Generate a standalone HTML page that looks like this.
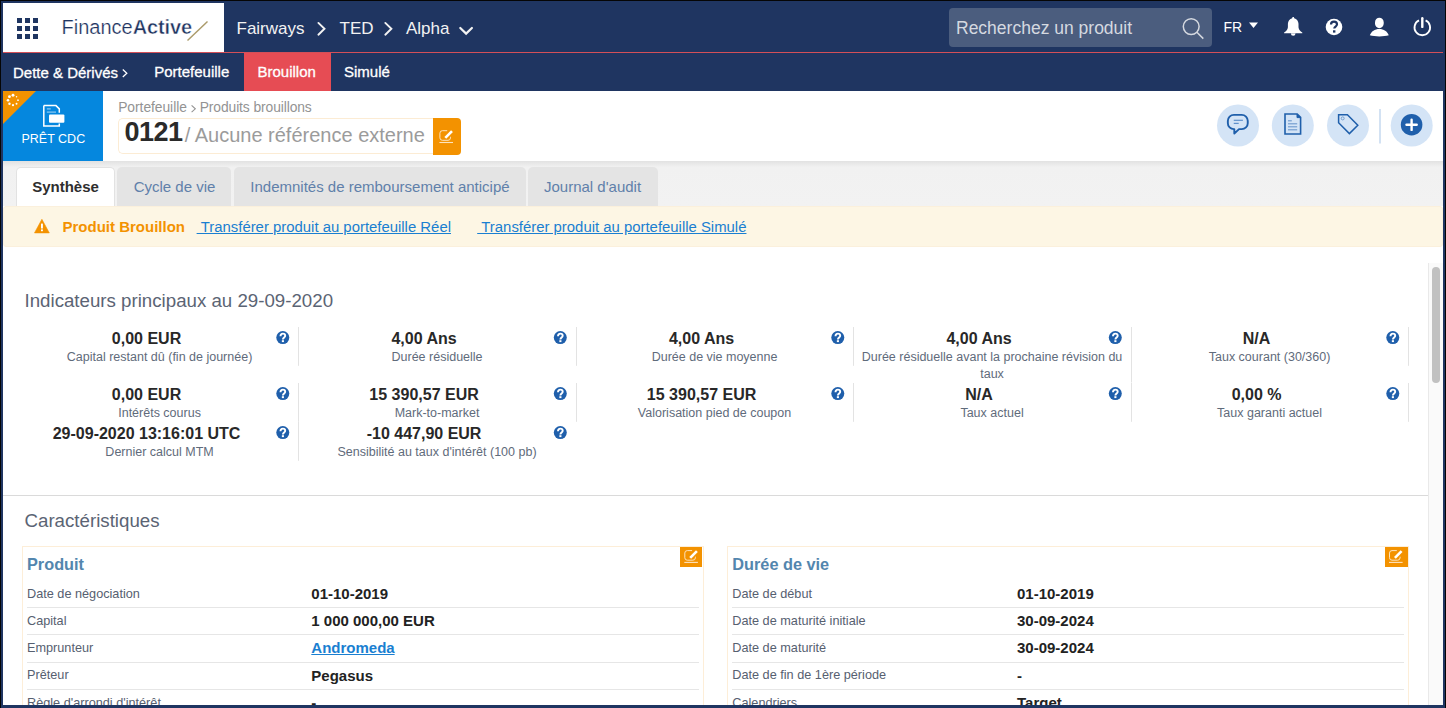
<!DOCTYPE html>
<html><head><meta charset="utf-8"><title>Finance Active</title>
<style>
html,body{margin:0;padding:0;width:1446px;height:708px;overflow:hidden;background:#1f3561}
body{position:relative;font-family:"Liberation Sans",sans-serif}
.t{position:absolute;white-space:nowrap}
.b{position:absolute}
svg.b{overflow:visible}
u{text-decoration:underline}
</style></head><body>
<div class="b" style="left:0px;top:0px;width:1446px;height:708px;background:#1f3561"></div>
<div class="b" style="left:0px;top:0px;width:1446px;height:1px;background:#050505"></div>
<div class="b" style="left:0px;top:0px;width:1px;height:708px;background:#050505"></div>
<div class="b" style="left:1445px;top:0px;width:1px;height:708px;background:#050505"></div>
<div class="b" style="left:3px;top:3px;width:1440px;height:702px;background:#fff"></div>
<div class="b" style="left:3px;top:3px;width:1440px;height:49px;background:#1f3561"></div>
<div class="b" style="left:3px;top:3px;width:221px;height:49px;background:#fff"></div>
<div class="b" style="left:3px;top:52px;width:1440px;height:1px;background:#d44f58"></div>
<div class="b" style="left:17px;top:18px;width:5px;height:5px;background:#1f3561"></div>
<div class="b" style="left:17px;top:26px;width:5px;height:5px;background:#1f3561"></div>
<div class="b" style="left:17px;top:34px;width:5px;height:5px;background:#1f3561"></div>
<div class="b" style="left:25px;top:18px;width:5px;height:5px;background:#1f3561"></div>
<div class="b" style="left:25px;top:26px;width:5px;height:5px;background:#1f3561"></div>
<div class="b" style="left:25px;top:34px;width:5px;height:5px;background:#1f3561"></div>
<div class="b" style="left:33px;top:18px;width:5px;height:5px;background:#1f3561"></div>
<div class="b" style="left:33px;top:26px;width:5px;height:5px;background:#1f3561"></div>
<div class="b" style="left:33px;top:34px;width:5px;height:5px;background:#1f3561"></div>
<div class="t" style="left:61.5px;top:17.27px;font-size:20px;line-height:20px;color:#1f3561"><span style="-webkit-text-stroke:0.22px #fff">Finance</span><b style="font-weight:700;-webkit-text-stroke:0.45px #fff;letter-spacing:-0.1px">Active</b></div>
<svg class="b" style="left:0;top:0" width="1446" height="708"><line x1="187.5" y1="40.5" x2="207.5" y2="21.5" stroke="#ab9b6b" stroke-width="1.5"/></svg>
<div class="t " style="left:236.50px;top:19.91px;font-size:17px;line-height:17px;font-weight:400;color:#f2f2f2;">Fairways</div>
<div class="t " style="left:339.50px;top:19.91px;font-size:17px;line-height:17px;font-weight:400;color:#f2f2f2;">TED</div>
<div class="t " style="left:406.00px;top:19.91px;font-size:17px;line-height:17px;font-weight:400;color:#f2f2f2;">Alpha</div>
<svg class="b" style="left:0;top:0" width="1446" height="708" fill="none" stroke="#f2f2f2" stroke-width="1.9" stroke-linecap="round"><polyline points="318.4,22.9 324.5,28.8 318.4,34.7"/><polyline points="385.3,22.9 391.4,28.8 385.3,34.7"/><polyline points="460.3,28 466.1,33.6 471.9,28" stroke-width="2.2"/></svg>
<div class="b" style="left:949px;top:8px;width:263px;height:39px;background:#4b5d7e;border-radius:4px"></div>
<div class="t " style="left:956.00px;top:19.59px;font-size:17.5px;line-height:17.5px;font-weight:400;color:#d5d9e0;">Recherchez un produit</div>
<svg class="b" style="left:0;top:0" width="1446" height="708" fill="none" stroke="#d5d9e0" stroke-width="1.5"><circle cx="1191.2" cy="26.6" r="7.9"/><line x1="1196.9" y1="32.3" x2="1203.3" y2="38.6"/></svg>
<div class="t " style="left:1223.50px;top:20.45px;font-size:14px;line-height:14px;font-weight:400;color:#fff;">FR</div>
<svg class="b" style="left:0;top:0" width="1446" height="708"><polygon points="1249,22.5 1258,22.5 1253.5,28" fill="#fff"/><path d="M1293.2,17 c0.6,0 1,0.5 1,1.2 c2.6,0.6 4.2,2.8 4.3,5.6 v3.5 c0.3,2.5 1.6,4 3.8,5.1 v0.8 h-18.2 v-0.8 c2.2,-1.1 3.5,-2.6 3.8,-5.1 v-3.5 c0.1,-2.8 1.7,-5 4.3,-5.6 c0,-0.7 0.4,-1.2 1,-1.2z M1290.9,33.4 a2.3,2.3 0 0 0 4.6,0z" fill="#fff"/><circle cx="1334" cy="27" r="8.3" fill="#fff"/><path d="M1331,24.6 c0,-1.9 1.3,-3 3,-3 c1.8,0 3,1.1 3,2.7 c0,2.2 -2.7,2.3 -2.7,4.2" fill="none" stroke="#1f3561" stroke-width="2.2"/><rect x="1333" y="30.3" width="2.4" height="2.3" fill="#1f3561"/><rect x="1375" y="17.7" width="8.7" height="10.5" rx="4.35" ry="4.6" fill="#fff"/><path d="M1369.8,35.3 c1.5,-3.9 5,-6.3 9.5,-6.3 s8,2.4 9.5,6.3 c-2.5,0.8 -6,1.1 -9.5,1.1 s-7,-0.3 -9.5,-1.1z" fill="#fff"/><path d="M1419,20.4 A7.8,7.8 0 1 0 1425.6,20.4" fill="none" stroke="#fff" stroke-width="1.8"/><line x1="1422.3" y1="18.2" x2="1422.3" y2="26.9" stroke="#fff" stroke-width="2.4" stroke-linecap="round"/></svg>
<div class="b" style="left:3px;top:53px;width:1440px;height:38px;background:#1f3561"></div>
<div class="t " style="left:13.00px;top:65.00px;font-size:15px;line-height:15px;font-weight:400;color:#fff;-webkit-text-stroke:0.3px #fff">Dette &amp; Dérivés</div>
<svg class="b" style="left:0;top:0" width="1446" height="708"><polyline points="122.8,69.5 126.8,73.3 122.8,77" fill="none" stroke="#fff" stroke-width="1.3"/></svg>
<div class="t " style="left:154.20px;top:64.10px;font-size:15px;line-height:15px;font-weight:400;color:#fff;-webkit-text-stroke:0.3px #fff">Portefeuille</div>
<div class="b" style="left:244px;top:53px;width:87px;height:38px;background:#e64c54"></div>
<div class="t " style="left:257.50px;top:64.10px;font-size:15px;line-height:15px;font-weight:400;color:#fff;-webkit-text-stroke:0.3px #fff">Brouillon</div>
<div class="t " style="left:344.00px;top:64.10px;font-size:15px;line-height:15px;font-weight:400;color:#fff;-webkit-text-stroke:0.3px #fff">Simulé</div>
<div class="b" style="left:3px;top:91px;width:100px;height:70px;background:#0587de"></div>
<svg class="b" style="left:0;top:0" width="1446" height="708"><polygon points="3,91 36,91 3,124" fill="#f39200"/>
<circle cx="13.00" cy="95.20" r="1.45" fill="#fff"/>
<circle cx="16.54" cy="96.66" r="0.75" fill="#fff"/>
<circle cx="18.00" cy="100.20" r="0.85" fill="#fff"/>
<circle cx="16.54" cy="103.74" r="0.95" fill="#fff"/>
<circle cx="13.00" cy="105.20" r="1.1" fill="#fff"/>
<circle cx="9.46" cy="103.74" r="1.2" fill="#fff"/>
<circle cx="8.00" cy="100.20" r="1.3" fill="#fff"/>
<circle cx="9.46" cy="96.66" r="1.4" fill="#fff"/>
<path d="M43.8,105.6 h12.2 l3.3,3.3 v3.8 M59.3,123.5 v2.4 h-15.5 v-20.3" fill="none" stroke="#fff" stroke-width="1.5"/><rect x="49" y="114.4" width="15.4" height="8.3" rx="1" fill="#fff"/><rect x="46.8" y="108.3" width="3.9" height="1.2" fill="#8fcaf2"/><rect x="46.8" y="111.5" width="9.2" height="1.2" fill="#8fcaf2"/></svg>
<div class="t " style="left:21.50px;top:132.72px;font-size:12.5px;line-height:12.5px;font-weight:400;color:#fff;">PRÊT CDC</div>
<div class="t " style="left:118.20px;top:101.18px;font-size:13.85px;line-height:13.85px;font-weight:400;color:#939393;letter-spacing:-0.05px">Portefeuille</div>
<div class="t " style="left:199.70px;top:101.18px;font-size:13.85px;line-height:13.85px;font-weight:400;color:#939393;letter-spacing:-0.1px">Produits brouillons</div>
<svg class="b" style="left:0;top:0" width="1446" height="708"><polyline points="191.6,105.4 195.3,108.8 191.6,112.1" fill="none" stroke="#939393" stroke-width="1.1"/></svg>
<div class="b" style="left:118px;top:118px;width:316px;height:36px;border:1px solid #fcecd4;border-right:none;border-radius:5px 0 0 5px;box-sizing:border-box"></div>
<div class="t " style="left:124.50px;top:118.64px;font-size:27px;line-height:27px;font-weight:700;color:#2a2a2a;letter-spacing:-0.55px">0121</div>
<div class="t " style="left:184.70px;top:124.67px;font-size:20px;line-height:20px;font-weight:400;color:#9b9b9b;">/ Aucune référence externe</div>
<div class="b" style="left:433px;top:118px;width:27.5px;height:37px;background:#f39200;border-radius:0 4px 4px 0"></div>
<svg class="b" style="left:0;top:0" width="1446" height="708"><g transform="translate(439.4,130.2) scale(1)" fill="none"><path d="M7.8,0.5 H3 A2.5,2.5 0 0 0 0.5,3 V7.6 A2.5,2.5 0 0 0 3,10.1 H8.6 A2.5,2.5 0 0 0 11.1,7.6 V6.6" stroke-width="1" stroke="#fde3bd"/><line x1="5.9" y1="7.7" x2="12.6" y2="1.0" stroke-width="2.6" stroke="#fff"/><line x1="0" y1="12.3" x2="13.6" y2="12.3" stroke-width="1.1" stroke="#fde3bd"/></g></svg>
<svg class="b" style="left:0;top:0" width="1446" height="708">
<circle cx="1238" cy="125.5" r="21" fill="#d4e4f6"/>
<circle cx="1292.8" cy="125.5" r="21" fill="#d4e4f6"/>
<circle cx="1348" cy="125.5" r="21" fill="#d4e4f6"/>
<circle cx="1411.7" cy="125.5" r="21" fill="#d4e4f6"/>
<rect x="1379" y="109" width="2" height="34.5" fill="#d3e2f3"/>
<path d="M1234.3,129.15 V133.6 L1239,129.15 H1241.75 A6,6 0 0 0 1247.75,123.15 V120.85 A6,6 0 0 0 1241.75,114.85 H1233.85 A6,6 0 0 0 1227.85,120.85 V123.15 A6,6 0 0 0 1233.85,129.15 Z" fill="none" stroke="#1f5fab" stroke-width="1.9" stroke-linejoin="round"/><line x1="1233.75" y1="120.3" x2="1242.9" y2="120.3" stroke="#5f90cb" stroke-width="1.2"/><line x1="1233.75" y1="123.4" x2="1238.7" y2="123.4" stroke="#5f90cb" stroke-width="1.2"/>
<path d="M1285,114 h12.2 l3.4,3.4 v16.6 h-15.6z" fill="none" stroke="#1f5fab" stroke-width="1.6"/><path d="M1297,114 v3.6 h3.6" fill="#1f5fab" stroke="#1f5fab" stroke-width="1"/><g stroke="#6c98cd" stroke-width="1.1"><line x1="1288" y1="120.8" x2="1291.8" y2="120.8"/><line x1="1288" y1="123.8" x2="1297.2" y2="123.8"/><line x1="1288" y1="126.8" x2="1297.2" y2="126.8"/><line x1="1288" y1="129.8" x2="1297.2" y2="129.8"/></g>
<path d="M1338.6,114.7 h8.8 l10.4,10.6 l-8.4,8.3 l-10.8,-10.8z" fill="none" stroke="#1f5fab" stroke-width="1.5" stroke-linejoin="miter"/><circle cx="1342.7" cy="118.4" r="1.5" fill="none" stroke="#6c98cd" stroke-width="0.9"/>
<circle cx="1411.6" cy="124.7" r="10.8" fill="#1f5fab"/><line x1="1406.5" y1="124.7" x2="1416.7" y2="124.7" stroke="#fff" stroke-width="2.4" stroke-linecap="round"/><line x1="1411.6" y1="119.7" x2="1411.6" y2="129.9" stroke="#fff" stroke-width="2.4" stroke-linecap="round"/>
</svg>
<div class="b" style="left:3px;top:161px;width:1440px;height:45px;background:linear-gradient(#e2e2e2, #f1f1f1 6px, #f2f2f2)"></div>
<div class="b" style="left:16px;top:167px;width:99px;height:40px;background:#fff;border:1px solid #e2e2e2;border-bottom:none;border-radius:5px 5px 0 0;box-sizing:border-box"></div>
<div class="t " style="left:32.20px;top:179.30px;font-size:15px;line-height:15px;font-weight:700;color:#2e2e2e;">Synthèse</div>
<div class="b" style="left:117px;top:167px;width:114px;height:39px;background:#e4e4e4;border-radius:5px 5px 0 0"></div>
<div class="t " style="left:133.70px;top:179.30px;font-size:15px;line-height:15px;font-weight:400;color:#6080aa;">Cycle de vie</div>
<div class="b" style="left:234px;top:167px;width:292px;height:39px;background:#e4e4e4;border-radius:5px 5px 0 0"></div>
<div class="t " style="left:250.30px;top:179.30px;font-size:15px;line-height:15px;font-weight:400;color:#6080aa;">Indemnités de remboursement anticipé</div>
<div class="b" style="left:528px;top:167px;width:130px;height:39px;background:#e4e4e4;border-radius:5px 5px 0 0"></div>
<div class="t " style="left:544.00px;top:179.30px;font-size:15px;line-height:15px;font-weight:400;color:#6080aa;">Journal d'audit</div>
<div class="b" style="left:3px;top:206px;width:1440px;height:41px;background:#fdf6e4;border:1px solid #fbf0dc;border-radius:3px;box-sizing:border-box"></div>
<svg class="b" style="left:0;top:0" width="1446" height="708"><path d="M41.9,219.3 l7.4,13.6 h-14.8z" fill="#f39200" stroke="#f39200" stroke-width="0.6" stroke-linejoin="round"/><rect x="41" y="223.6" width="1.9" height="4.9" fill="#fff"/><rect x="41" y="229.4" width="1.9" height="1.8" fill="#fff"/></svg>
<div class="t " style="left:62.50px;top:219.30px;font-size:15px;line-height:15px;font-weight:700;color:#f39200;">Produit Brouillon</div>
<div class="t " style="left:196.60px;top:220.19px;font-size:14.9px;line-height:14.9px;font-weight:400;color:#1a7fd1;text-decoration:underline">&nbsp;Transférer produit au portefeuille Réel</div>
<div class="t " style="left:477.20px;top:220.19px;font-size:14.9px;line-height:14.9px;font-weight:400;color:#1a7fd1;text-decoration:underline">&nbsp;Transférer produit au portefeuille Simulé</div>
<div class="b" style="left:1428px;top:263px;width:15px;height:442px;background:#fafafa;border-left:1px solid #e9e9e9;box-sizing:border-box"></div>
<div class="b" style="left:1432px;top:267px;width:8px;height:116px;background:#c1c1c1;border-radius:4px"></div>
<div class="t " style="left:24.50px;top:292.47px;font-size:18.7px;line-height:18.7px;font-weight:400;color:#5b6474;">Indicateurs principaux au 29-09-2020</div>
<svg class="b" style="left:0;top:0" width="1446" height="708">
<rect x="298" y="327" width="1" height="38.8" fill="#e3e3e3"/><circle cx="282.80" cy="337.60" r="6.5" fill="#1f5fab"/><path d="M280.50,336.20 C280.50,334.40 281.60,333.60 282.90,333.60 C284.30,333.60 285.20,334.50 285.20,335.70 C285.20,337.40 282.90,337.60 282.90,339.50" fill="none" stroke="#fff" stroke-width="1.9"/><rect x="281.85" y="340.20" width="2.1" height="1.9" fill="#fff"/><rect x="576" y="327" width="1" height="38.8" fill="#e3e3e3"/><circle cx="560.30" cy="337.60" r="6.5" fill="#1f5fab"/><path d="M558.00,336.20 C558.00,334.40 559.10,333.60 560.40,333.60 C561.80,333.60 562.70,334.50 562.70,335.70 C562.70,337.40 560.40,337.60 560.40,339.50" fill="none" stroke="#fff" stroke-width="1.9"/><rect x="559.35" y="340.20" width="2.1" height="1.9" fill="#fff"/><rect x="853" y="327" width="1" height="38.8" fill="#e3e3e3"/><circle cx="837.80" cy="337.60" r="6.5" fill="#1f5fab"/><path d="M835.50,336.20 C835.50,334.40 836.60,333.60 837.90,333.60 C839.30,333.60 840.20,334.50 840.20,335.70 C840.20,337.40 837.90,337.60 837.90,339.50" fill="none" stroke="#fff" stroke-width="1.9"/><rect x="836.85" y="340.20" width="2.1" height="1.9" fill="#fff"/><rect x="1131" y="327" width="1" height="55.5" fill="#e3e3e3"/><circle cx="1115.30" cy="337.60" r="6.5" fill="#1f5fab"/><path d="M1113.00,336.20 C1113.00,334.40 1114.10,333.60 1115.40,333.60 C1116.80,333.60 1117.70,334.50 1117.70,335.70 C1117.70,337.40 1115.40,337.60 1115.40,339.50" fill="none" stroke="#fff" stroke-width="1.9"/><rect x="1114.35" y="340.20" width="2.1" height="1.9" fill="#fff"/><rect x="1408" y="327" width="1" height="38.8" fill="#e3e3e3"/><circle cx="1392.80" cy="337.60" r="6.5" fill="#1f5fab"/><path d="M1390.50,336.20 C1390.50,334.40 1391.60,333.60 1392.90,333.60 C1394.30,333.60 1395.20,334.50 1395.20,335.70 C1395.20,337.40 1392.90,337.60 1392.90,339.50" fill="none" stroke="#fff" stroke-width="1.9"/><rect x="1391.85" y="340.20" width="2.1" height="1.9" fill="#fff"/><rect x="298" y="383" width="1" height="38.8" fill="#e3e3e3"/><circle cx="282.80" cy="393.60" r="6.5" fill="#1f5fab"/><path d="M280.50,392.20 C280.50,390.40 281.60,389.60 282.90,389.60 C284.30,389.60 285.20,390.50 285.20,391.70 C285.20,393.40 282.90,393.60 282.90,395.50" fill="none" stroke="#fff" stroke-width="1.9"/><rect x="281.85" y="396.20" width="2.1" height="1.9" fill="#fff"/><rect x="576" y="383" width="1" height="38.8" fill="#e3e3e3"/><circle cx="560.30" cy="393.60" r="6.5" fill="#1f5fab"/><path d="M558.00,392.20 C558.00,390.40 559.10,389.60 560.40,389.60 C561.80,389.60 562.70,390.50 562.70,391.70 C562.70,393.40 560.40,393.60 560.40,395.50" fill="none" stroke="#fff" stroke-width="1.9"/><rect x="559.35" y="396.20" width="2.1" height="1.9" fill="#fff"/><rect x="853" y="383" width="1" height="38.8" fill="#e3e3e3"/><circle cx="837.80" cy="393.60" r="6.5" fill="#1f5fab"/><path d="M835.50,392.20 C835.50,390.40 836.60,389.60 837.90,389.60 C839.30,389.60 840.20,390.50 840.20,391.70 C840.20,393.40 837.90,393.60 837.90,395.50" fill="none" stroke="#fff" stroke-width="1.9"/><rect x="836.85" y="396.20" width="2.1" height="1.9" fill="#fff"/><rect x="1131" y="383" width="1" height="38.8" fill="#e3e3e3"/><circle cx="1115.30" cy="393.60" r="6.5" fill="#1f5fab"/><path d="M1113.00,392.20 C1113.00,390.40 1114.10,389.60 1115.40,389.60 C1116.80,389.60 1117.70,390.50 1117.70,391.70 C1117.70,393.40 1115.40,393.60 1115.40,395.50" fill="none" stroke="#fff" stroke-width="1.9"/><rect x="1114.35" y="396.20" width="2.1" height="1.9" fill="#fff"/><rect x="1408" y="383" width="1" height="38.8" fill="#e3e3e3"/><circle cx="1392.80" cy="393.60" r="6.5" fill="#1f5fab"/><path d="M1390.50,392.20 C1390.50,390.40 1391.60,389.60 1392.90,389.60 C1394.30,389.60 1395.20,390.50 1395.20,391.70 C1395.20,393.40 1392.90,393.60 1392.90,395.50" fill="none" stroke="#fff" stroke-width="1.9"/><rect x="1391.85" y="396.20" width="2.1" height="1.9" fill="#fff"/><rect x="298" y="422" width="1" height="38.8" fill="#e3e3e3"/><circle cx="282.80" cy="432.60" r="6.5" fill="#1f5fab"/><path d="M280.50,431.20 C280.50,429.40 281.60,428.60 282.90,428.60 C284.30,428.60 285.20,429.50 285.20,430.70 C285.20,432.40 282.90,432.60 282.90,434.50" fill="none" stroke="#fff" stroke-width="1.9"/><rect x="281.85" y="435.20" width="2.1" height="1.9" fill="#fff"/><circle cx="560.30" cy="432.60" r="6.5" fill="#1f5fab"/><path d="M558.00,431.20 C558.00,429.40 559.10,428.60 560.40,428.60 C561.80,428.60 562.70,429.50 562.70,430.70 C562.70,432.40 560.40,432.60 560.40,434.50" fill="none" stroke="#fff" stroke-width="1.9"/><rect x="559.35" y="435.20" width="2.1" height="1.9" fill="#fff"/>
</svg>
<div class="t" style="left:20.80px;width:251.50px;text-align:center;top:331.06px;font-size:16px;line-height:16px;font-weight:700;color:#282828;">0,00 EUR</div>
<div class="t" style="left:20.80px;width:277.50px;text-align:center;top:350.62px;font-size:12.5px;line-height:12.5px;font-weight:400;color:#5f6b7b;">Capital restant dû (fin de journée)</div>
<div class="t" style="left:298.30px;width:251.50px;text-align:center;top:331.06px;font-size:16px;line-height:16px;font-weight:700;color:#282828;">4,00 Ans</div>
<div class="t" style="left:298.30px;width:277.50px;text-align:center;top:350.62px;font-size:12.5px;line-height:12.5px;font-weight:400;color:#5f6b7b;">Durée résiduelle</div>
<div class="t" style="left:575.80px;width:251.50px;text-align:center;top:331.06px;font-size:16px;line-height:16px;font-weight:700;color:#282828;">4,00 Ans</div>
<div class="t" style="left:575.80px;width:277.50px;text-align:center;top:350.62px;font-size:12.5px;line-height:12.5px;font-weight:400;color:#5f6b7b;">Durée de vie moyenne</div>
<div class="t" style="left:853.30px;width:251.50px;text-align:center;top:331.06px;font-size:16px;line-height:16px;font-weight:700;color:#282828;">4,00 Ans</div>
<div class="t" style="left:853.30px;width:277.50px;text-align:center;top:350.62px;font-size:12.5px;line-height:12.5px;font-weight:400;color:#5f6b7b;">Durée résiduelle avant la prochaine révision du</div>
<div class="t" style="left:853.30px;width:277.50px;text-align:center;top:368.22px;font-size:12.5px;line-height:12.5px;font-weight:400;color:#5f6b7b;">taux</div>
<div class="t" style="left:1130.80px;width:251.50px;text-align:center;top:331.06px;font-size:16px;line-height:16px;font-weight:700;color:#282828;">N/A</div>
<div class="t" style="left:1130.80px;width:277.50px;text-align:center;top:350.62px;font-size:12.5px;line-height:12.5px;font-weight:400;color:#5f6b7b;">Taux courant (30/360)</div>
<div class="t" style="left:20.80px;width:251.50px;text-align:center;top:387.06px;font-size:16px;line-height:16px;font-weight:700;color:#282828;">0,00 EUR</div>
<div class="t" style="left:20.80px;width:277.50px;text-align:center;top:406.62px;font-size:12.5px;line-height:12.5px;font-weight:400;color:#5f6b7b;">Intérêts courus</div>
<div class="t" style="left:298.30px;width:251.50px;text-align:center;top:387.06px;font-size:16px;line-height:16px;font-weight:700;color:#282828;">15 390,57 EUR</div>
<div class="t" style="left:298.30px;width:277.50px;text-align:center;top:406.62px;font-size:12.5px;line-height:12.5px;font-weight:400;color:#5f6b7b;">Mark-to-market</div>
<div class="t" style="left:575.80px;width:251.50px;text-align:center;top:387.06px;font-size:16px;line-height:16px;font-weight:700;color:#282828;">15 390,57 EUR</div>
<div class="t" style="left:575.80px;width:277.50px;text-align:center;top:406.62px;font-size:12.5px;line-height:12.5px;font-weight:400;color:#5f6b7b;">Valorisation pied de coupon</div>
<div class="t" style="left:853.30px;width:251.50px;text-align:center;top:387.06px;font-size:16px;line-height:16px;font-weight:700;color:#282828;">N/A</div>
<div class="t" style="left:853.30px;width:277.50px;text-align:center;top:406.62px;font-size:12.5px;line-height:12.5px;font-weight:400;color:#5f6b7b;">Taux actuel</div>
<div class="t" style="left:1130.80px;width:251.50px;text-align:center;top:387.06px;font-size:16px;line-height:16px;font-weight:700;color:#282828;">0,00 %</div>
<div class="t" style="left:1130.80px;width:277.50px;text-align:center;top:406.62px;font-size:12.5px;line-height:12.5px;font-weight:400;color:#5f6b7b;">Taux garanti actuel</div>
<div class="t" style="left:20.80px;width:251.50px;text-align:center;top:426.06px;font-size:16px;line-height:16px;font-weight:700;color:#282828;">29-09-2020 13:16:01 UTC</div>
<div class="t" style="left:20.80px;width:277.50px;text-align:center;top:445.62px;font-size:12.5px;line-height:12.5px;font-weight:400;color:#5f6b7b;">Dernier calcul MTM</div>
<div class="t" style="left:298.30px;width:251.50px;text-align:center;top:426.06px;font-size:16px;line-height:16px;font-weight:700;color:#282828;">-10 447,90 EUR</div>
<div class="t" style="left:298.30px;width:277.50px;text-align:center;top:445.62px;font-size:12.5px;line-height:12.5px;font-weight:400;color:#5f6b7b;">Sensibilité au taux d'intérêt (100 pb)</div>
<div class="b" style="left:3px;top:495px;width:1425px;height:1px;background:#dadada"></div>
<div class="t " style="left:24.50px;top:512.17px;font-size:18.7px;line-height:18.7px;font-weight:400;color:#5b6474;">Caractéristiques</div>
<div class="b" style="left:22px;top:546px;width:682px;height:174px;border:1px solid #fdeed8;box-sizing:border-box"></div>
<div class="b" style="left:727px;top:546px;width:682px;height:174px;border:1px solid #fdeed8;box-sizing:border-box"></div>
<div class="b" style="left:680px;top:546.5px;width:22px;height:20.5px;background:#f39200"></div>
<div class="b" style="left:1385px;top:546.5px;width:23px;height:20.5px;background:#f39200"></div>
<svg class="b" style="left:0;top:0" width="1446" height="708"><g transform="translate(684.3,550.1) scale(1)" fill="none"><path d="M7.8,0.5 H3 A2.5,2.5 0 0 0 0.5,3 V7.6 A2.5,2.5 0 0 0 3,10.1 H8.6 A2.5,2.5 0 0 0 11.1,7.6 V6.6" stroke-width="1" stroke="#fde3bd"/><line x1="5.9" y1="7.7" x2="12.6" y2="1.0" stroke-width="2.6" stroke="#fff"/><line x1="0" y1="12.3" x2="13.6" y2="12.3" stroke-width="1.1" stroke="#fde3bd"/></g><g transform="translate(1389,550.1) scale(1)" fill="none"><path d="M7.8,0.5 H3 A2.5,2.5 0 0 0 0.5,3 V7.6 A2.5,2.5 0 0 0 3,10.1 H8.6 A2.5,2.5 0 0 0 11.1,7.6 V6.6" stroke-width="1" stroke="#fde3bd"/><line x1="5.9" y1="7.7" x2="12.6" y2="1.0" stroke-width="2.6" stroke="#fff"/><line x1="0" y1="12.3" x2="13.6" y2="12.3" stroke-width="1.1" stroke="#fde3bd"/></g></svg>
<div class="t " style="left:27.00px;top:556.20px;font-size:16.3px;line-height:16.3px;font-weight:700;color:#5386ae;">Produit</div>
<div class="t " style="left:732.30px;top:556.20px;font-size:16.3px;line-height:16.3px;font-weight:700;color:#5386ae;">Durée de vie</div>
<div class="t " style="left:27.00px;top:587.95px;font-size:12.7px;line-height:12.7px;font-weight:400;color:#566070;">Date de négociation</div>
<div class="t " style="left:311.30px;top:586.00px;font-size:15px;line-height:15px;font-weight:700;color:#222;">01-10-2019</div>
<div class="t " style="left:732.30px;top:587.95px;font-size:12.7px;line-height:12.7px;font-weight:400;color:#566070;">Date de début</div>
<div class="t " style="left:1017.00px;top:586.00px;font-size:15px;line-height:15px;font-weight:700;color:#222;">01-10-2019</div>
<div class="b" style="left:27px;top:607px;width:672px;height:1px;background:#e6e6e6"></div>
<div class="b" style="left:732px;top:607px;width:672px;height:1px;background:#e6e6e6"></div>
<div class="t " style="left:27.00px;top:614.85px;font-size:12.7px;line-height:12.7px;font-weight:400;color:#566070;">Capital</div>
<div class="t " style="left:311.30px;top:612.90px;font-size:15px;line-height:15px;font-weight:700;color:#222;">1 000 000,00 EUR</div>
<div class="t " style="left:732.30px;top:614.85px;font-size:12.7px;line-height:12.7px;font-weight:400;color:#566070;">Date de maturité initiale</div>
<div class="t " style="left:1017.00px;top:612.90px;font-size:15px;line-height:15px;font-weight:700;color:#222;">30-09-2024</div>
<div class="b" style="left:27px;top:634px;width:672px;height:1px;background:#e6e6e6"></div>
<div class="b" style="left:732px;top:634px;width:672px;height:1px;background:#e6e6e6"></div>
<div class="t " style="left:27.00px;top:642.25px;font-size:12.7px;line-height:12.7px;font-weight:400;color:#566070;">Emprunteur</div>
<div class="t " style="left:311.30px;top:640.30px;font-size:15px;line-height:15px;font-weight:700;color:#222;"><u style='color:#1a7fd1'>Andromeda</u></div>
<div class="t " style="left:732.30px;top:642.25px;font-size:12.7px;line-height:12.7px;font-weight:400;color:#566070;">Date de maturité</div>
<div class="t " style="left:1017.00px;top:640.30px;font-size:15px;line-height:15px;font-weight:700;color:#222;">30-09-2024</div>
<div class="b" style="left:27px;top:662px;width:672px;height:1px;background:#e6e6e6"></div>
<div class="b" style="left:732px;top:662px;width:672px;height:1px;background:#e6e6e6"></div>
<div class="t " style="left:27.00px;top:669.45px;font-size:12.7px;line-height:12.7px;font-weight:400;color:#566070;">Prêteur</div>
<div class="t " style="left:311.30px;top:667.50px;font-size:15px;line-height:15px;font-weight:700;color:#222;">Pegasus</div>
<div class="t " style="left:732.30px;top:669.45px;font-size:12.7px;line-height:12.7px;font-weight:400;color:#566070;">Date de fin de 1ère période</div>
<div class="t " style="left:1017.00px;top:667.50px;font-size:15px;line-height:15px;font-weight:700;color:#222;">-</div>
<div class="b" style="left:27px;top:689px;width:672px;height:1px;background:#e6e6e6"></div>
<div class="b" style="left:732px;top:689px;width:672px;height:1px;background:#e6e6e6"></div>
<div class="t " style="left:27.00px;top:696.65px;font-size:12.7px;line-height:12.7px;font-weight:400;color:#566070;">Règle d'arrondi d'intérêt</div>
<div class="t " style="left:311.30px;top:694.70px;font-size:15px;line-height:15px;font-weight:700;color:#222;">-</div>
<div class="t " style="left:732.30px;top:696.65px;font-size:12.7px;line-height:12.7px;font-weight:400;color:#566070;">Calendriers</div>
<div class="t " style="left:1017.00px;top:694.70px;font-size:15px;line-height:15px;font-weight:700;color:#222;">Target</div>
<div class="b" style="left:0px;top:705px;width:1446px;height:3px;background:#1f3561"></div>
<div class="b" style="left:1443px;top:0px;width:2px;height:708px;background:#1f3561"></div>
<div class="b" style="left:0px;top:1px;width:1446px;height:2px;background:#1f3561"></div>
<div class="b" style="left:1px;top:0px;width:2px;height:708px;background:#1f3561"></div>
<div class="b" style="left:0px;top:0px;width:1446px;height:1px;background:#050505"></div>
<div class="b" style="left:0px;top:0px;width:1px;height:708px;background:#050505"></div>
<div class="b" style="left:1445px;top:0px;width:1px;height:708px;background:#050505"></div>
</body></html>
